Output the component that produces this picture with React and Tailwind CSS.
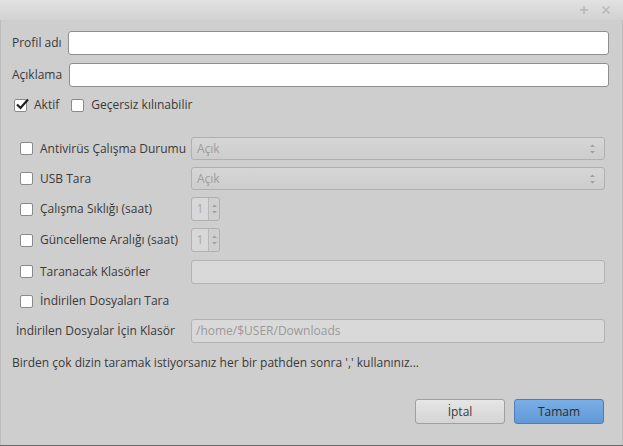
import React from 'react';

const Check = ({ checked }) => (
  <span className="w-[13px] h-[13px] rounded-[2px] border border-[#8a8a8a] bg-white flex items-center justify-center shrink-0 relative">
    {checked && (
      <svg width="15" height="14" viewBox="0 0 15 14" className="absolute -top-[3px] left-[0px]">
        <path d="M2 7.5 L5.5 11 L13 2.5" stroke="#1e1e1e" strokeWidth="2.2" fill="none" />
      </svg>
    )}
  </span>
);

const CheckRow = ({ label, checked, className = '' }) => (
  <label className={`flex items-center gap-[7px] ${className}`}>
    <Check checked={checked} />
    <span>{label}</span>
  </label>
);

const Arrows = () => (
  <svg width="7" height="12" viewBox="0 0 7 12">
    <path d="M1 4 L3.5 1.5 L6 4 Z" fill="#a0a0a0" />
    <path d="M1 8 L3.5 10.5 L6 8 Z" fill="#a0a0a0" />
  </svg>
);

const Combo = () => (
  <div className="h-[23px] flex-1 rounded-[3px] border border-[#b0b0b0] bg-gradient-to-b from-[#d6d6d6] to-[#cdcdcd] flex items-center justify-between pl-[5px] pr-[8px] text-[#9c9c9c]">
    <span>Açık</span>
    <Arrows />
  </div>
);

const Spin = () => (
  <div className="h-[24px] w-[29px] rounded-[3px] border border-[#b0b0b0] flex text-[#a8a8a8]">
    <div className="w-[16px] bg-[#d8d8d8] flex items-center justify-center rounded-l-[3px]">1</div>
    <div className="flex-1 border-l border-[#b8b8b8] bg-[#cfcfcf] flex items-center justify-center rounded-r-[3px]">
      <Arrows />
    </div>
  </div>
);

const Field = ({ value = '', disabled }) => (
  <div
    className={`h-[24px] flex-1 rounded-[3px] border flex items-center px-[4px] ${
      disabled ? 'bg-[#d9d9d9] border-[#b2b2b2] text-[#9a9a9a]' : 'bg-white border-[#8f8f8f]'
    }`}
  >
    {value}
  </div>
);

export default function App() {
  return (
    <div className="w-[623px] h-[446px] bg-[#cecece] text-[12px] text-[#3a3a3a] flex flex-col border-b border-[#6a6a6a]" style={{ fontFamily: '"Open Sans", sans-serif' }}>
      <div className="h-[20px] bg-gradient-to-b from-[#e2e2e2] to-[#d2d2d2] flex items-center justify-end gap-[12px] pr-[12px] shrink-0">
        <svg width="10" height="10" viewBox="0 0 10 10">
          <path d="M5 1 V9 M1 5 H9" stroke="#b8b8b8" strokeWidth="1.5" />
        </svg>
        <svg width="10" height="10" viewBox="0 0 10 10">
          <path d="M1.5 1.5 L8.5 8.5 M8.5 1.5 L1.5 8.5" stroke="#b8b8b8" strokeWidth="1.5" />
        </svg>
      </div>

      <div className="flex-1 flex flex-col pl-[11px] pr-[13px] pt-[11px] border-x border-[#bdbdbd]">
        <div className="flex items-center gap-[6px]">
          <span>Profil adı</span>
          <Field />
        </div>
        <div className="flex items-center gap-[7px] mt-[8px]">
          <span>Açıklama</span>
          <Field />
        </div>
        <div className="flex items-center gap-[12px] mt-[7px] pl-[2px] h-[22px]">
          <CheckRow label="Aktif" checked />
          <CheckRow label="Geçersiz kılınabilir" />
        </div>

        <div className="flex flex-col mt-[21px] pl-[8px] pr-[4px]">
          <div className="flex items-center h-[23px]">
            <CheckRow label="Antivirüs Çalışma Durumu" className="w-[171px]" />
            <Combo />
          </div>
          <div className="flex items-center h-[23px] mt-[7px]">
            <CheckRow label="USB Tara" className="w-[171px]" />
            <Combo />
          </div>
          <div className="flex items-center h-[24px] mt-[7px]">
            <CheckRow label="Çalışma Sıklığı (saat)" className="w-[171px]" />
            <Spin />
          </div>
          <div className="flex items-center h-[24px] mt-[7px]">
            <CheckRow label="Güncelleme Aralığı (saat)" className="w-[171px]" />
            <Spin />
          </div>
          <div className="flex items-center h-[25px] mt-[7px]">
            <CheckRow label="Taranacak Klasörler" className="w-[171px]" />
            <Field disabled />
          </div>
          <div className="flex items-center h-[22px] mt-[6px]">
            <CheckRow label="İndirilen Dosyaları Tara" />
          </div>
          <div className="flex items-center h-[24px] mt-[7px] -ml-[4px]">
            <span className="w-[175px]">İndirilen Dosyalar İçin Klasör</span>
            <Field disabled value="/home/$USER/Downloads" />
          </div>
        </div>

        <div className="mt-[9px] h-[22px] flex items-center">
          Birden çok dizin taramak istiyorsanız her bir pathden sonra ',' kullanınız...
        </div>

        <div className="flex justify-end gap-[9px] mt-[25px] pr-[5px]">
          <button className="w-[90px] h-[25px] rounded-[3px] border border-[#a0a0a0] bg-gradient-to-b from-[#e6e6e6] to-[#d4d4d4] text-[#3a3a3a]">
            İptal
          </button>
          <button className="w-[90px] h-[25px] rounded-[3px] border border-[#4c7fb8] bg-gradient-to-b from-[#79aee6] to-[#6199d8] text-[#2c2c2c]">
            Tamam
          </button>
        </div>
      </div>
    </div>
  );
}
